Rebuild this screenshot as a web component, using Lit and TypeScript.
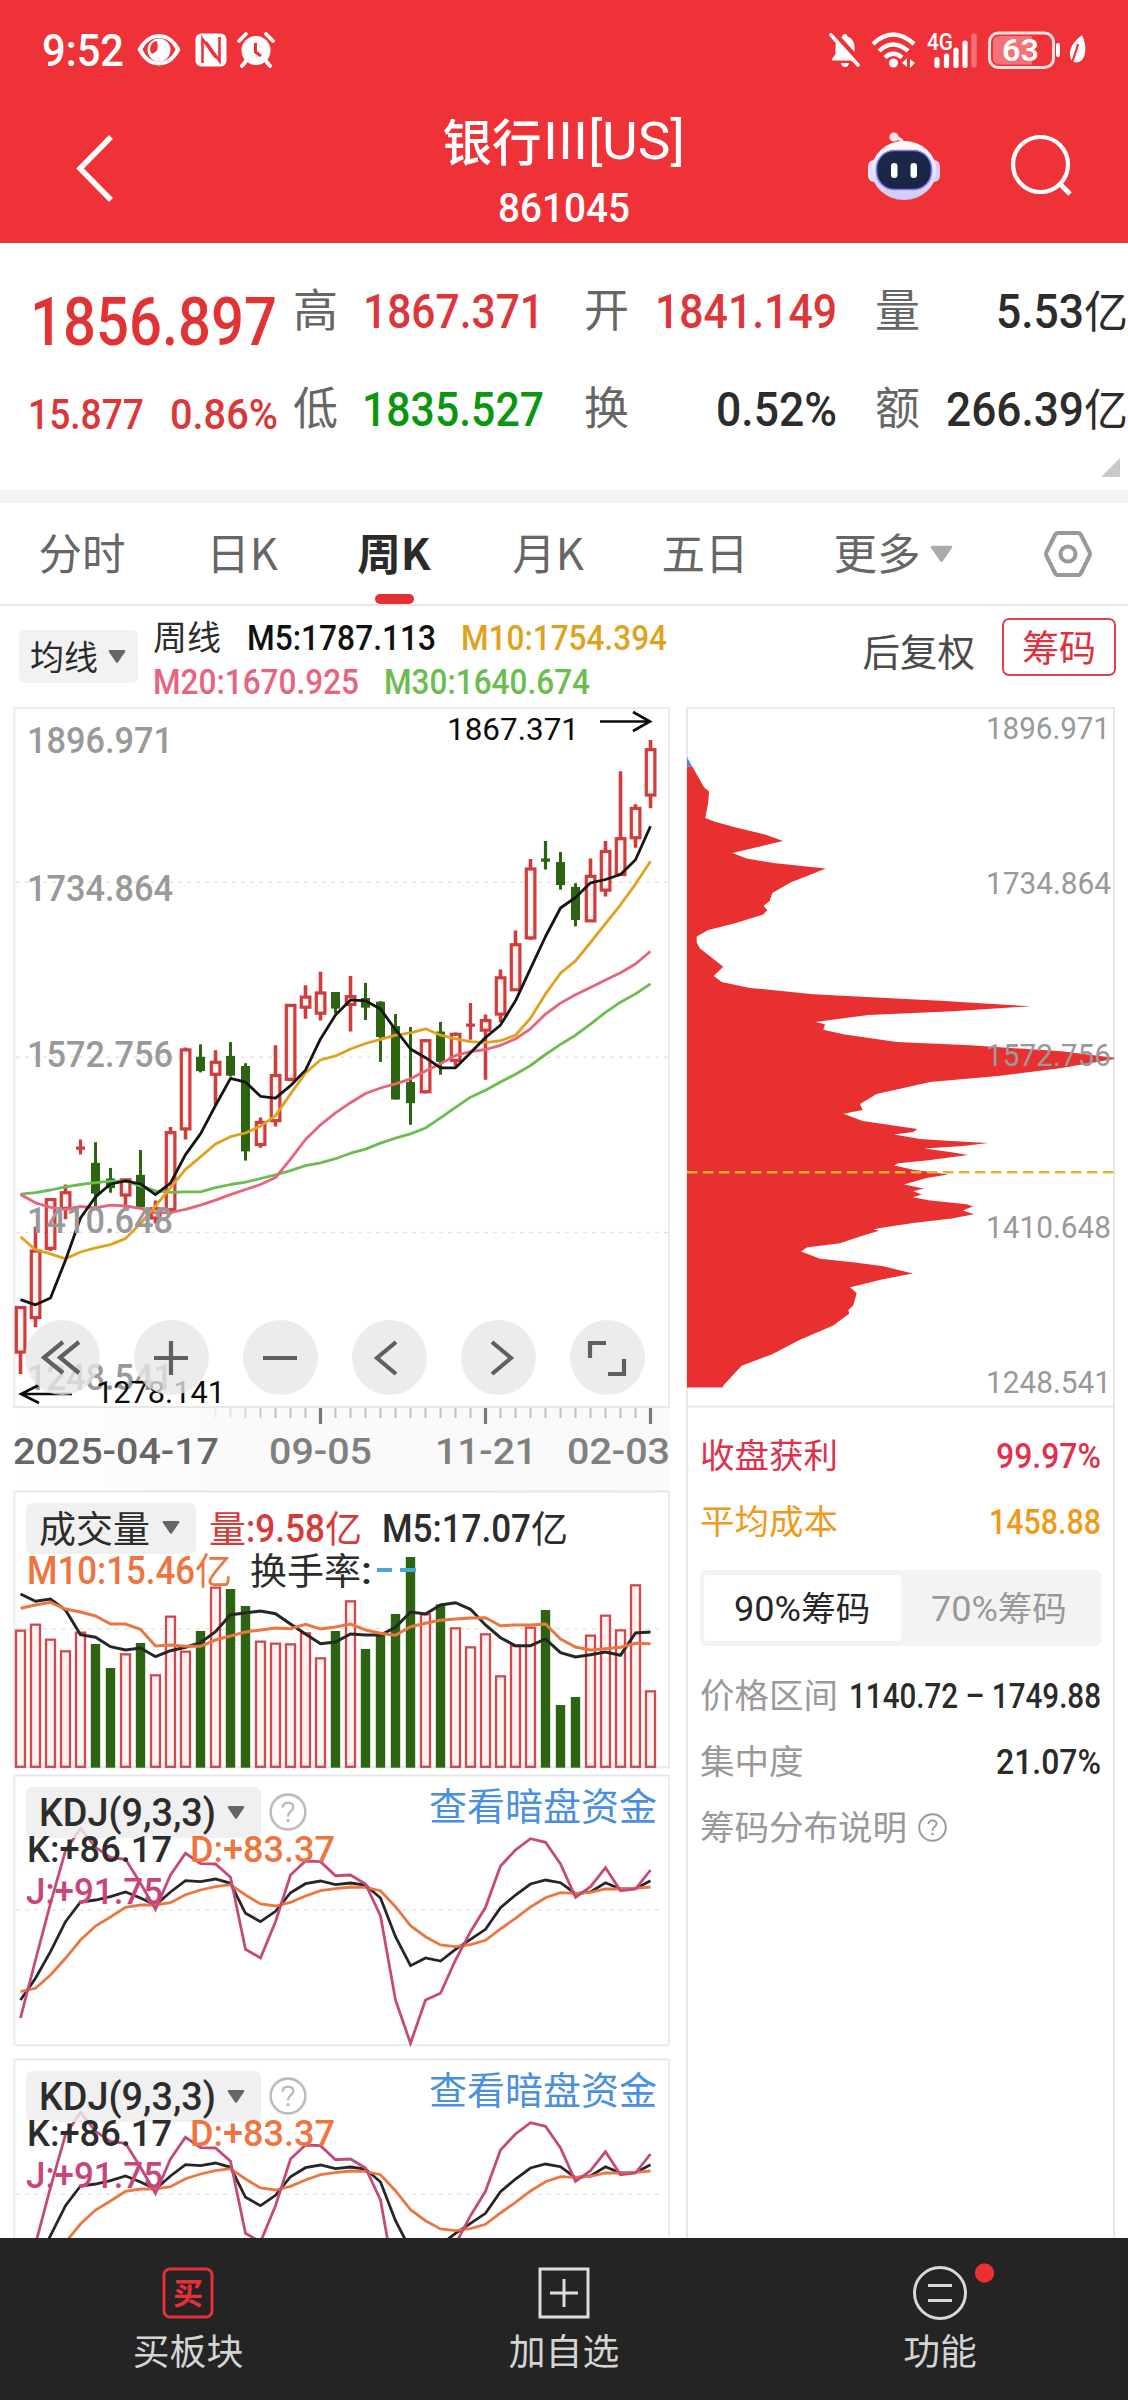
import { LitElement, html, svg, css, nothing } from "lit";
import { customElement, property } from "lit/decorators.js";

/* ---------- shared helpers ---------- */

const num = (text: string, width: number, size: number, weight = 500) => {
  const h = Math.round(size * 0.711);
  return html`<svg class="num" width=${width} height=${h}>
    <text x="0" y=${h} textLength=${width} lengthAdjust="spacingAndGlyphs"
      font-size=${size} font-weight=${weight}>${text}</text>
  </svg>`;
};

const label = (text: string, x: number, y: number, width: number, size: number, fill: string, weight = 400) =>
  svg`<text x=${x} y=${y} textLength=${width} lengthAdjust="spacingAndGlyphs"
    font-size=${size} font-weight=${weight} fill=${fill}>${text}</text>`;

const caret = (w: number, h: number, fill: string) =>
  html`<svg class="ico" width=${w} height=${h} viewBox="0 0 18 13"><path d="M1.5 0H16.5Q18 0.5 17 2L10 12.2Q9 13.4 8 12.2L1 2Q0 0.5 1.5 0Z" fill=${fill}/></svg>`;

const help = (d: number) =>
  html`<svg class="ico" width=${d} height=${d} viewBox="0 0 38 38">
    <circle cx="19" cy="19" r="17.4" fill="none" stroke="currentColor" stroke-width="2.6"/>
    <path d="M13.6 14.6Q14 9.6 19 9.6Q24.3 9.8 24.3 14.2Q24.2 16.6 21.4 18.6Q19 20.4 19 23.4" fill="none" stroke="currentColor" stroke-width="2.4"/>
    <circle cx="19" cy="27.6" r="1.7" fill="currentColor"/></svg>`;

const X0 = 20.5;
const PITCH = 15;
const cx = (i: number) => X0 + i * PITCH;
const line = (values: number[], unit: number) =>
  values.map((v, i) => `${cx(i).toFixed(1)},${(v * unit).toFixed(1)}`).join(" ");

const RED = "#d03c3c";
const GREEN = "#2d6412";

const base = css`
  * { box-sizing: border-box; }
  svg { display: block; flex: none; overflow: visible; }
  .num, .chart { font-family: Roboto, "Liberation Sans", sans-serif; }
  .num { fill: currentColor; }
`;

/* ---------- price chart ---------- */

type Candle = [up: 0 | 1, high: number, top: number, bottom: number, low: number];

const PRICE_UNIT = 0.4592;
const CANDLES: Candle[] = [
  [1, 1320, 1323, 1420, 1468], [1, 1147, 1200, 1345, 1366], [1, 1086, 1088, 1194, 1200],
  [1, 1055, 1073, 1107, 1131], [1, 957, 975, 977, 990], [0, 963, 1008, 1075, 1103],
  [0, 1019, 1042, 1063, 1073], [1, 1043, 1045, 1078, 1112], [0, 980, 1034, 1105, 1105],
  [1, 1090, 1108, 1128, 1140], [1, 930, 942, 1110, 1120], [1, 757, 762, 934, 957],
  [0, 750, 777, 808, 811], [1, 763, 789, 815, 882], [0, 745, 775, 818, 820],
  [0, 791, 797, 983, 1003], [1, 909, 920, 968, 975], [1, 752, 818, 916, 929],
  [1, 663, 665, 826, 830], [1, 621, 647, 669, 694], [1, 592, 638, 682, 698],
  [0, 636, 636, 672, 682], [1, 601, 646, 663, 722], [0, 616, 649, 670, 697],
  [0, 656, 657, 734, 788], [0, 684, 710, 870, 870], [0, 712, 832, 878, 925],
  [1, 738, 742, 853, 857], [0, 701, 722, 788, 816], [1, 724, 728, 785, 797],
  [1, 660, 707, 709, 740], [1, 685, 698, 719, 827], [1, 587, 605, 684, 702],
  [1, 502, 533, 631, 633], [1, 346, 368, 518, 522], [0, 307, 345, 352, 369],
  [0, 331, 353, 403, 413], [0, 399, 407, 479, 493], [1, 345, 384, 481, 482],
  [1, 307, 330, 414, 428], [1, 155, 302, 380, 382], [1, 227, 236, 300, 322],
  [1, 87, 108, 207, 236],
];
const MA5 = [1306, 1317, 1302, 1220, 1128, 1082, 1054, 1047, 1054, 1077, 1052, 990, 945, 883, 824, 832, 863, 867, 840, 806, 738, 686, 653, 655, 673, 718, 760, 779, 801, 801, 768, 735, 708, 655, 585, 515, 453, 430, 398, 391, 380, 348, 275];
const MA10 = [1169, 1197, 1206, 1217, 1202, 1193, 1186, 1173, 1140, 1102, 1062, 1022, 995, 967, 951, 943, 928, 905, 858, 812, 784, 775, 760, 748, 739, 730, 725, 716, 730, 738, 744, 746, 742, 730, 693, 640, 595, 568, 528, 487, 446, 401, 351];
const MA20 = [1077, 1095, 1105, 1109, 1103, 1106, 1100, 1102, 1107, 1117, 1116, 1109, 1100, 1089, 1077, 1066, 1055, 1040, 1000, 957, 925, 899, 877, 857, 845, 836, 825, 808, 792, 774, 766, 761, 752, 738, 716, 684, 660, 642, 626, 610, 594, 575, 547];
const MA30 = [1076, 1073, 1067, 1060, 1055, 1051, 1048, 1048, 1058, 1069, 1072, 1071, 1071, 1062, 1055, 1050, 1042, 1034, 1025, 1014, 1008, 999, 987, 978, 965, 954, 945, 932, 910, 887, 865, 850, 832, 815, 796, 772, 750, 730, 706, 680, 658, 640, 618];

@customElement("price-chart")
class PriceChart extends LitElement {
  static styles = [base, css`
    :host { display: block; }
    .wrap { position: relative; height: 701px; }
    .tools {
      position: absolute; left: 10.5px; bottom: 13px; display: flex; gap: 34px;
    }
    .tool {
      width: 75px; height: 75px; border-radius: 50%;
      background: rgba(231, 231, 231, 0.78);
      display: flex; align-items: center; justify-content: center;
    }
    .tool path { fill: none; stroke: #606060; stroke-width: 4.2; }
    .axis { height: 83px; background: linear-gradient(90deg, #fff 0%, #fafafa 30%, #f9f9f9 100%); }
  `];

  private candle([up, high, top, bottom, low]: Candle, i: number) {
    const x = cx(i);
    const [h, t, b, l] = [high, top, bottom, low].map((v) => v * PRICE_UNIT);
    if (b - t < 4) {
      const c = up ? RED : GREEN;
      return svg`<path d="M${x} ${h}V${l}M${x - 4.5} ${(t + b) / 2}H${x + 4.5}" stroke=${c} stroke-width="3.2" fill="none"/>`;
    }
    return up
      ? svg`<path d="M${x} ${h}V${t}M${x} ${b}V${l}" stroke=${RED} stroke-width="3.6"/>
          <rect x=${x - 4.2} y=${t} width="8.600" height=${b - t} fill="#fff4f2" stroke=${RED} stroke-width="3.2"/>`
      : svg`<path d="M${x} ${h}V${l}" stroke=${GREEN} stroke-width="3"/>
          <rect x=${x - 4.5} y=${t} width="9" height=${b - t} fill=${GREEN}/>`;
  }

  render() {
    const tools = [
      "M20 1L1 16.500L20 32M36 1L17 16.500L36 32", "M2 17H36M19 0V34", "M2 17H36",
      "M26 1L7 17L26 33", "M13 1L32 17L13 33", "M2 17V2H18M36 18V33H20",
    ];
    return html`
      <div class="wrap">
        <svg class="chart" width="656" height="701" viewBox="14 7 656 701">
          <path d="M14.300 708V8H669V708" fill="none" stroke="#ececec" stroke-width="2"/>
          <path d="M13.300 707H670" stroke="#e8e8e8" stroke-width="2"/>
          <path d="M16 182.3H668M16 357.3H668M16 532.6H668" stroke="#e4e4e4" stroke-width="1.5" stroke-dasharray="4 5"/>
          ${CANDLES.map((c, i) => this.candle(c, i))}
          ${[[MA30, "#6cbd4f"], [MA20, "#e8637c"], [MA10, "#dfa21d"], [MA5, "#151515"]].map(([v, c]) =>
            svg`<polyline points=${line(v as number[], PRICE_UNIT)} fill="none" stroke=${c} stroke-width="2.8" stroke-linejoin="round"/>`)}
          ${label("1896.971", 27, 53, 146, 36, "#999", 500)}
          ${label("1734.864", 27, 201, 146, 36, "#999", 500)}
          ${label("1572.756", 27, 367, 146, 36, "#999", 500)}
          ${label("1410.648", 27, 533, 146, 36, "#999", 500)}
          ${label("1248.541", 27, 690, 146, 36, "#999", 500)}
          ${label("1867.371", 447, 40, 132, 32, "#0c0c0c")}
          ${label("1278.141", 96, 702.5, 129, 32, "#0c0c0c")}
          <path d="M600 21.5H650M633 12L650 21.5L633 31" fill="none" stroke="#0c0c0c" stroke-width="2.6"/>
          <path d="M72 694H21M39 685L21 694L39 703" fill="none" stroke="#0c0c0c" stroke-width="2.6"/>
        </svg>
        <div class="tools">
          ${tools.map((d) => html`<div class="tool"><svg width="38" height="34" viewBox="0 0 38 34"><path d=${d}/></svg></div>`)}
        </div>
      </div>
      <div class="axis">
        <svg class="chart" width="656" height="83" viewBox="14 0 656 83">
          ${Array.from({ length: 30 }, (_, k) => k + 13).map((i) => {
            const major = i === 20 || i === 31 || i === 42;
            return svg`<path d="M${cx(i)} 0V${major ? 16 : 10}" stroke=${major ? "#777" : "#c0c0c0"}
              stroke-width=${major ? 3.2 : 2} opacity=${Math.min(1, (i - 12) / 5)}/>`;
          })}
          ${label("2025-04-17", 13, 55.5, 206, 37, "#666", 500)}
          ${label("09-05", 269, 55.5, 103, 37, "#808080", 500)}
          ${label("11-21", 435, 55.5, 102, 37, "#808080", 500)}
          ${label("02-03", 567, 55.5, 103, 37, "#808080", 500)}
        </svg>
      </div>`;
  }
}

/* ---------- volume ---------- */

const UNIT3 = 1 / 3;
const VOL = [419, 401, 446, 481, 425, 462, 534, 490, 459, 553, 377, 482, 423, 290, 297, 348, 452, 458, 460, 427, 502, 423, 331, 477, 430, 372, 201, 370, 343, 412, 469, 430, 556, 465, 410, 360, 645, 621, 434, 374, 418, 283, 601];
const VOL_DOWN = new Set([5, 6, 8, 12, 14, 15, 21, 23, 24, 25, 26, 28, 35, 36, 37]);
const VM5 = [312, 334, 327, 360, 434, 442, 470, 480, 474, 500, 482, 472, 458, 425, 374, 369, 363, 371, 402, 432, 461, 456, 432, 435, 435, 412, 366, 372, 345, 338, 358, 405, 443, 467, 467, 447, 488, 501, 494, 486, 496, 429, 426];
const VM10 = [355, 345, 337, 357, 366, 378, 402, 402, 418, 468, 465, 469, 469, 450, 438, 426, 420, 414, 416, 403, 417, 411, 402, 420, 430, 436, 410, 400, 391, 387, 384, 383, 407, 405, 405, 402, 447, 471, 480, 476, 472, 460, 461];

const panel = css`
  :host { display: block; font-family: "Noto Sans CJK SC", sans-serif; font-size: 37px; line-height: 50px; color: #2c2c2c; }
  .panel { position: relative; height: 284px; }
  .legend { position: absolute; left: 12px; right: 13px; top: 12px; }
  .row { display: flex; align-items: center; height: 50px; white-space: nowrap; }
  .pick { display: flex; align-items: center; height: 51px; border-radius: 6px; background: rgba(238, 237, 238, 0.82); flex: none; }
`;

@customElement("volume-panel")
class VolumePanel extends LitElement {
  static styles = [base, panel, css`
    .pick { width: 170px; padding: 0 16px 2px 13px; justify-content: space-between; }
    .vol { color: #d83a3a; display: flex; align-items: center; margin-left: 13px; }
    .m5 { display: flex; align-items: center; margin-left: 20px; }
    .m10 { display: flex; align-items: center; color: #ee7440; padding-left: 1px; }
    .rate { display: flex; align-items: center; margin-left: 18px; }
    .second { height: 34px; line-height: 34px; margin-top: 0; }
    .cjk { position: relative; top: -1.5px; }
  `];
  render() {
    return html`<div class="panel">
      <svg class="chart" width="656" height="284" viewBox="14 1 656 284">
        <path d="M13.300 1.5H670M14 277.3H670" stroke="#e8e8e8" stroke-width="2"/>
        <path d="M14.300 1V277M669 1V277" stroke="#ececec" stroke-width="2"/>
        <path d="M16 138.7H664" stroke="#e6e6e6" stroke-width="1.5" stroke-dasharray="4 5"/>
        ${VOL.map((v, i) => {
          const y = v * UNIT3;
          return VOL_DOWN.has(i)
            ? svg`<rect x=${cx(i) - 4.7} y=${y} width="9.400" height=${277.7 - y} fill=${GREEN}/>`
            : svg`<rect x=${cx(i) - 4.5} y=${y + 1} width="9" height=${275.8 - y} fill="#fff4f2" stroke="#d2484c" stroke-width="2.300"/>`;
        })}
        <polyline points=${line(VM5, UNIT3)} fill="none" stroke="#262626" stroke-width="3"/>
        <polyline points=${line(VM10, UNIT3)} fill="none" stroke="#ea7742" stroke-width="3"/>
      </svg>
      <div class="legend">
        <div class="row">
          <div class="pick"><span>成交量</span>${caret(18, 13, "#666")}</div>
          <div class="vol"><span class="cjk">量</span>${num(":9.58", 79, 38, 500)}<span class="cjk">亿</span></div>
          <div class="m5">${num("M5:17.07", 149, 38, 500)}<span class="cjk">亿</span></div>
        </div>
        <div class="row second">
          <div class="m10">${num("M10:15.46", 168, 38, 500)}<span class="cjk">亿</span></div>
          <div class="rate"><span class="cjk">换手率</span>${num(":", 11, 38, 500)}
            <svg width="42" height="4"><path d="M5 2H20M28 2H44" stroke="#4da6d8" stroke-width="4"/></svg></div>
        </div>
      </div>
    </div>`;
  }
}

/* ---------- KDJ ---------- */

const K = [690, 625, 545, 455, 396, 390, 380, 366, 384, 405, 366, 332, 335, 327, 340, 430, 455, 424, 368, 341, 333, 344, 339, 345, 384, 500, 587, 564, 573, 538, 508, 478, 413, 375, 342, 330, 338, 371, 366, 338, 357, 356, 332];
const D = [665, 655, 615, 565, 510, 468, 441, 412, 405, 405, 398, 374, 360, 350, 344, 375, 402, 408, 397, 378, 362, 356, 351, 352, 362, 410, 467, 500, 525, 530, 524, 511, 477, 445, 411, 383, 368, 370, 367, 357, 357, 355, 351];
const J = [744, 570, 400, 242, 175, 232, 262, 268, 340, 418, 315, 250, 281, 282, 322, 538, 564, 455, 315, 273, 275, 317, 315, 342, 438, 690, 820, 690, 670, 570, 485, 412, 288, 240, 206, 217, 282, 382, 350, 293, 362, 357, 300];

@customElement("kdj-panel")
class KdjPanel extends LitElement {
  static styles = [base, panel, css`
    .pick { width: 235px; padding: 0 16px 0 13px; justify-content: space-between; }
    .help { color: #bcbcbc; margin-left: 8px; }
    .link { margin-left: auto; color: #4a8fe0; font-size: 38px; position: relative; top: -8.5px; }
    .k { height: 42px; margin-top: -10px; padding-left: 1px; gap: 18px; }
    .j { height: 42px; color: #c8457c; padding-left: 0; }
    .d { color: #ee7440; }
  `];
  render() {
    return html`<div class="panel">
      <svg class="chart" width="656" height="284" viewBox="14 5 656 284">
        <path d="M13.300 5.5H670" stroke="#e8e8e8" stroke-width="2"/>
        <path d="M14 275.2H670" stroke="#ebebeb" stroke-width="2"/>
        <path d="M14.300 5V275M669 5V275" stroke="#ececec" stroke-width="2"/>
        <path d="M16 140H660" stroke="#e6e6e6" stroke-width="1.5" stroke-dasharray="4 5"/>
        <polyline points=${line(K, UNIT3)} fill="none" stroke="#262626" stroke-width="2.8"/>
        <polyline points=${line(D, UNIT3)} fill="none" stroke="#ea7742" stroke-width="2.8"/>
        <polyline points=${line(J, UNIT3)} fill="none" stroke="#c44a7c" stroke-width="2.8"/>
      </svg>
      <div class="legend">
        <div class="row">
          <div class="pick">${num("KDJ(9,3,3)", 177, 38, 500)}${caret(18, 13, "#666")}</div>
          <div class="help">${help(38)}</div>
          <div class="link">查看暗盘资金</div>
        </div>
        <div class="row k">${num("K:+86.17", 145, 37.5, 500)}<span class="d">${num("D:+83.37", 145, 37.5, 500)}</span></div>
        <div class="row j">${num("J:+91.75", 137, 37.5, 500)}</div>
      </div>
    </div>`;
  }
}

/* ---------- chip distribution ---------- */

const CHIPS: [number, number][] = [
  [37, 145], [72, 190], [87, 199], [85, 222], [76, 257], [105, 265], [165, 277], [255, 293], [309, 307], [240, 319],
  [157, 333], [200, 345], [280, 355], [437, 367], [385, 382], [333, 397], [277, 420], [269, 438], [251, 448], [262, 458],
  [250, 467], [165, 486], [85, 501], [50, 515], [50, 528], [60, 541], [130, 581], [101, 601], [125, 614], [210, 627],
  [400, 641], [780, 655], [1052, 667], [820, 678], [565, 686], [406, 701], [435, 706], [430, 718], [490, 728], [650, 745],
  [870, 752], [1145, 765], [1303, 779], [1303, 782], [1140, 802], [955, 819], [750, 832], [590, 858], [540, 880], [548, 893], [490, 901],
  [548, 917], [712, 934], [700, 941], [642, 946], [720, 956], [800, 960], [924, 965], [850, 971], [733, 977], [810, 984],
  [864, 991], [740, 1003], [655, 1009], [642, 1014], [700, 1023], [740, 1027], [804, 1033], [740, 1041], [672, 1055],
  [731, 1064], [700, 1070], [725, 1077], [698, 1083], [750, 1090], [860, 1098], [879, 1103], [848, 1112], [882, 1120],
  [815, 1129], [700, 1139], [600, 1150], [580, 1153], [597, 1156], [545, 1167], [480, 1183], [380, 1192], [363, 1201],
  [420, 1217], [525, 1225], [610, 1233], [698, 1249], [605, 1262], [545, 1273], [510, 1279], [530, 1292], [520, 1318],
  [505, 1329], [508, 1336], [460, 1362], [360, 1393], [275, 1425], [185, 1450], [130, 1493], [128, 1497], [21, 1497], [21, 145],
];

@customElement("chip-panel")
class ChipPanel extends LitElement {
  static styles = [base, css`
    :host { display: flex; flex-direction: column; font-family: "Noto Sans CJK SC", sans-serif; font-size: 34.5px; line-height: 66px; color: #999; }
    .stats { flex: 1; border: solid #e6e6e6; border-width: 0 2px; padding: 14px 12px 0 12px; }
    .row { display: flex; justify-content: space-between; align-items: center; height: 66px; }
    .row span { position: relative; top: -2px; white-space: nowrap; }
    .profit { color: #e0304a; }
    .cost { color: #ef9a1a; }
    .dark { color: #2a2a2a; }
    .seg { display: flex; height: 76px; margin: 16px 0 16px; padding: 5px 4px; background: #f3f3f3; border-radius: 5px; }
    .opt { flex: 1; display: flex; align-items: center; justify-content: center; border-radius: 4px; }
    .opt span { position: relative; top: -2px; }
    .on { background: #fff; color: #262626; }
    .note { justify-content: flex-start; gap: 11px; }
  `];
  render() {
    const pts = CHIPS.map(([x, y]) => `${(x / 3).toFixed(1)},${(y * PRICE_UNIT).toFixed(1)}`).join(" ");
    return html`
      <svg class="chart" width="429" height="701" viewBox="6 7 429 701">
        <path d="M7 708V8H434V708" fill="none" stroke="#e3e3e3" stroke-width="1.6"/>
        <path d="M7 706.6H434" stroke="#e3e3e3" stroke-width="1.6"/>
        <polygon points="7,57 12.3,66.6 7,66.6" fill="#4f8fe0"/>
        <polygon points=${pts} fill="#e83030"/>
        <path d="M7 472.3H434" stroke="#e6b22e" stroke-width="2.6" stroke-dasharray="10.500 5.500"/>
        ${label("1896.971", 306, 39, 124, 31, "#999")}
        ${label("1734.864", 306, 194, 125, 31, "#999")}
        ${label("1572.756", 306, 366, 125, 31, "#999")}
        ${label("1410.648", 306, 538, 125, 31, "#999")}
        ${label("1248.541", 306, 693, 125, 31, "#999")}
      </svg>
      <div class="stats">
        <div class="row profit"><span>收盘获利</span>${num("99.97%", 105, 35)}</div>
        <div class="row cost"><span>平均成本</span>${num("1458.88", 112, 35)}</div>
        <div class="seg">
          <div class="opt on">${num("90%", 67, 35, 400)}<span>筹码</span></div>
          <div class="opt">${num("70%", 67, 35, 400)}<span>筹码</span></div>
        </div>
        <div class="row"><span>价格区间</span><div class="dark">${num("1140.72 – 1749.88", 252, 34.5)}</div></div>
        <div class="row"><span>集中度</span><div class="dark">${num("21.07%", 105, 35)}</div></div>
        <div class="row note"><span>筹码分布说明</span>${help(29)}</div>
      </div>`;
  }
}

/* ---------- page ---------- */

@customElement("quote-pair")
class QuotePair extends LitElement {
  @property() name = "";
  @property() value = "";
  @property() unit = "";
  @property({ type: Number }) span = 0;
  static styles = [base, css`
    :host { display: flex; align-items: center; justify-content: space-between; font-family: "Noto Sans CJK SC", sans-serif; font-size: 45px; line-height: 60px; }
    .name { color: #666; position: relative; top: -3px; left: -1px; }
    .val { display: flex; align-items: center; }
    .unit { position: relative; top: -2px; font-size: 44px; }
  `];
  render() {
    return html`<span class="name">${this.name}</span>
      <div class="val">${num(this.value, this.span, 48)}${this.unit ? html`<span class="unit">${this.unit}</span>` : nothing}</div>`;
  }
}

@customElement("app-root")
class AppRoot extends LitElement {
  static styles = [base, css`
    :host { display: flex; flex-direction: column; width: 1128px; height: 2400px; overflow: hidden; background: #fff; font-family: "Noto Sans CJK SC", sans-serif; color: #2c2c2c; }
    .head { flex: none; height: 243px; background: #ef3238; color: #fff; }
    .status { height: 100px; display: flex; align-items: center; justify-content: space-between; padding: 0 42px 0 42px; }
    .left, .right { display: flex; align-items: center; }
    .eye { margin-left: 12px; }
    .nfc { margin-left: 13px; }
    .clock { margin-left: 10px; }
    .wifi, .cell { margin-left: 10px; }
    .battery { margin-left: 11px; }
    .leaf { margin-left: 6px; }
    .bar { display: grid; grid-template-columns: 1fr 300px 1fr; height: 143px; align-items: start; }
    .back { padding: 35px 0 0 74px; }
    .title { display: flex; flex-direction: column; align-items: center; }
    .name { display: flex; align-items: center; font-size: 49.500px; font-weight: 500; line-height: 60px; height: 60px; margin-top: 11px; }
    .name span { position: relative; top: -1px; left: -1px; }
    .code { margin-top: 21.500px; }
    .acts { display: flex; justify-content: flex-end; align-items: center; padding: 31px 55px 0 0; gap: 70px; }
    .quote { flex: none; height: 247px; display: grid; grid-template-columns: 255px repeat(3, 252px); column-gap: 39px; grid-template-rows: 98px 98px 1fr; padding-top: 19px; }
    .big { color: #e23334; padding: 36px 0 0 30px; }
    .chg { color: #dc3638; padding: 38px 0 0 28px; display: flex; gap: 26px; }
    quote-pair { color: #2c2c2c; }
    quote-pair.up { color: #dc3638; }
    quote-pair.low { color: #0a960f; }
    quote-pair.up.wide, quote-pair.low { width: 250px; }
    .corner { grid-column: 4; justify-self: end; padding: 0 8px; }
    .band { flex: none; height: 13px; background: #f4f4f4; }
    .tabs { flex: none; height: 103px; border-bottom: 2px solid #e6e6e6; display: grid; grid-template-columns: 164px 156px 148px 160px 154px 222px 124px; font-size: 43.5px; line-height: 64px; color: #666; }
    .tab { display: flex; flex-direction: column; align-items: center; padding-top: 17px; }
    .tab.on { font-weight: 700; color: #2b2b2b; }
    .tab .mark { width: 39px; height: 10px; border-radius: 5px; background: #e33033; margin-top: 10px; }
    .more { flex-direction: row; align-items: flex-start; justify-content: center; gap: 9px; }
    .more svg { margin-top: 25px; }
    .cfg svg { margin: 10px 0 0 4px; }
    .ma { flex: none; height: 101px; display: flex; align-items: flex-start; padding: 0 12px 0 19px; font-size: 34px; line-height: 44px; }
    .pick { width: 119px; height: 53px; margin-top: 24px; border-radius: 6px; background: #f2f2f2; display: flex; align-items: center; justify-content: space-between; padding: 0 12px 1px 11px; }
    .lines { margin: 9px 0 0 15px; display: flex; flex-direction: column; width: 620px; }
    .ln { display: flex; align-items: center; height: 44px; }
    .ln span { position: relative; top: -1px; margin-right: 26px; }
    .m5 { color: #111; margin-right: 25px; }
    .m10 { color: #dfa21d; }
    .m20 { color: #e8637c; margin-right: 25px; }
    .m30 { color: #6cbd4f; }
    .adj { margin: 19px 0 0 auto; font-size: 37.5px; line-height: 50px; color: #4a4a4a; }
    .chips { margin: 12px 0 0 27px; width: 114px; height: 58px; border: 2px solid #dc4450; border-radius: 7px; color: #e0303e; font-size: 37px; line-height: 52px; text-align: center; }
    .main { flex: 1; min-height: 0; overflow: hidden; display: grid; grid-template-columns: 656px 429px; column-gap: 16px; padding-left: 14px; }
    .stack, chip-panel { height: 1531px; }
    .nav { flex: none; position: relative; height: 162px; background: #242424; color: #d4d4d4; display: grid; grid-template-columns: 376px 376px 376px; font-size: 36.8px; line-height: 50px; }
    .item { display: flex; flex-direction: column; align-items: center; padding-top: 27px; }
    .item svg { height: 55px; margin-bottom: 4px; }
    .buy { font-family: "Noto Sans CJK SC", sans-serif; }
  `];

  private statusIcons() {
    return html`
      <svg class="eye" width="46" height="34" viewBox="0 0 46 34"><path fill-rule="evenodd" fill="#fff" d="M23 1C34 1 41 10 44.500 16.500C41 24 34 32.500 23 32.500C12 32.500 5 24 1.500 16.500C5 10 12 1 23 1ZM23 5C14 5 9 11 6.500 16.500C9 22 14 28.500 23 28.500C32 28.500 37 22 39.500 16.500C37 11 32 5 23 5Z"/><circle cx="23" cy="17" r="11.500" fill="#fff"/><path d="M21 8A8 8 0 0 0 16 21Q24 19 21 8Z" fill="#ef3238"/></svg>
      <svg class="nfc" width="32" height="34" viewBox="0 0 32 34"><rect x="0.500" y="0.500" width="31" height="33" rx="6" fill="#fff"/><path d="M7.500 30V6L21 25M24.500 4V28L11 9" fill="none" stroke="#ef3238" stroke-width="2.600"/></svg>
      <svg class="clock" width="38" height="36" viewBox="0 0 38 36"><circle cx="19" cy="18.500" r="14.500" fill="#fff"/><path d="M2 9L9 2M36 9L29 2M9 29L5 34M29 29L33 34" stroke="#fff" stroke-width="3.800" stroke-linecap="round"/><path d="M18.500 11V20L24 24" fill="none" stroke="#ef3238" stroke-width="3"/></svg>`;
  }

  private signalIcons() {
    return html`
      <svg width="32" height="36" viewBox="0 0 32 36"><path d="M16 2C17.500 2 18.500 3 18.500 4.500C23 6 25.500 10 25.500 15V22L29 27V28.500H3V27L6.500 22V15C6.500 10 9 6 13.500 4.500C13.500 3 14.500 2 16 2Z" fill="#fff"/><path d="M12 31H20Q19.500 35 16 35T12 31Z" fill="#fff"/><path d="M4 1L31 31" stroke="#ef3238" stroke-width="6.500"/><path d="M2 3L29 33" stroke="#fff" stroke-width="3.600" stroke-linecap="round"/></svg>
      <svg class="wifi" width="46" height="36" viewBox="0 0 46 36"><g fill="none" stroke="#fff" stroke-width="4.400"><path d="M2 12Q22 -7 43 12"/><path d="M8 19Q22 6 37 19"/><path d="M14 25.500Q22 18 31 25.500"/></g><circle cx="22.500" cy="31" r="4.500" fill="#fff"/><path d="M31 31L36 26V35ZM44 31L39 36V27Z" fill="#fff"/></svg>
      <svg class="num cell" width="50" height="36" viewBox="0 0 50 36"><text x="0" y="17.500" font-size="23" font-weight="500" textLength="26" lengthAdjust="spacingAndGlyphs">4G</text><path d="M10 27.500V33.500M19.500 24V33.500M29 18V33.500M38 11V33.500" stroke="#fff" stroke-width="5.200" stroke-linecap="round"/><path d="M47 4V33" stroke="#fff" stroke-opacity=".3" stroke-width="5.500" stroke-linecap="round"/></svg>
      <svg class="num battery" width="74" height="38" viewBox="0 0 74 38"><rect x="1.500" y="2" width="64" height="34.500" rx="9" fill="none" stroke="#fff" stroke-opacity=".85" stroke-width="3"/><path d="M12 5H44V33.500H12Q5 33.500 5 27V11Q5 5 12 5Z" fill="#fff" opacity=".32"/><text x="14" y="30" font-size="32" font-weight="600" textLength="37" lengthAdjust="spacingAndGlyphs">63</text><path d="M70 14V24" stroke="#fff" stroke-width="4" stroke-linecap="round"/></svg>
      <svg class="leaf" width="18" height="32" viewBox="0 0 18 32"><path d="M14 1C18 9 19 20 14 26C11 29 7 29 4 27C-2 17 6 7 14 1Z" fill="#fff"/><path d="M10 10C8 18 7 22 3 30" stroke="#ef3238" stroke-width="2.200" fill="none"/></svg>`;
  }

  render() {
    return html`
      <div class="head">
        <div class="status">
          <div class="left">${num("9:52", 82, 45)}${this.statusIcons()}</div>
          <div class="right">${this.signalIcons()}</div>
        </div>
        <div class="bar">
          <div class="back"><svg width="40" height="68" viewBox="0 0 40 68"><path d="M37 2L6 33.500L37 65" fill="none" stroke="#fff" stroke-width="5.400"/></svg></div>
          <div class="title">
            <div class="name"><span>银行</span>${num("III[US]", 142, 51, 400)}</div>
            <div class="code">${num("861045", 132, 41)}</div>
          </div>
          <div class="acts">
            <svg width="74" height="70" viewBox="0 0 74 70">
              <defs>
                <linearGradient id="hd" x1="0" y1="0" x2="0" y2="1"><stop offset="0" stop-color="#fff"/><stop offset="1" stop-color="#cfcaf6"/></linearGradient>
                <linearGradient id="fc" x1="0" y1="0" x2="1" y2="1"><stop offset="0" stop-color="#1a2a46"/><stop offset="1" stop-color="#1a2348"/></linearGradient>
              </defs>
              <path d="M35 14Q36 7 28 7" fill="none" stroke="#f4dfe8" stroke-width="3.500"/>
              <circle cx="27" cy="6" r="4.600" fill="#f8e6ec"/>
              <rect x="1" y="29" width="12" height="22" rx="6" fill="#e4e0fb"/><rect x="61" y="29" width="12" height="22" rx="6" fill="#d4cef8"/>
              <ellipse cx="37" cy="39.500" rx="32.500" ry="29.500" fill="url(#hd)"/>
              <rect x="9.500" y="19.500" width="55" height="39" rx="18" fill="url(#fc)" stroke="#8478e8" stroke-width="1.600"/>
              <rect x="24" y="32" width="6.500" height="15" rx="3.200" fill="#fff"/><rect x="43.500" y="32" width="6.500" height="15" rx="3.200" fill="#fff"/>
            </svg>
            <svg width="62" height="62" viewBox="0 0 62 62"><circle cx="29.500" cy="29.500" r="27.500" fill="none" stroke="#fff" stroke-width="4.200"/><path d="M49 49L59 59" stroke="#fff" stroke-width="4.800"/></svg>
          </div>
        </div>
      </div>

      <div class="quote">
        <div class="big">${num("1856.897", 247, 66)}</div>
        <quote-pair class="up wide" name="高" value="1867.371" span="181"></quote-pair>
        <quote-pair class="up" name="开" value="1841.149" span="182"></quote-pair>
        <quote-pair name="量" value="5.53" unit="亿" span="88"></quote-pair>
        <div class="chg">${num("15.877", 116, 43)}${num("0.86%", 108, 43)}</div>
        <quote-pair class="low" name="低" value="1835.527" span="182"></quote-pair>
        <quote-pair name="换" value="0.52%" span="121"></quote-pair>
        <quote-pair name="额" value="266.39" unit="亿" span="138"></quote-pair>
        <div class="corner"><svg width="19" height="19"><path d="M19 0V19H0Z" fill="#c9c9c9"/></svg></div>
      </div>
      <div class="band"></div>

      <div class="tabs">
        <div class="tab">分时</div>
        <div class="tab">日K</div>
        <div class="tab on">周K<div class="mark"></div></div>
        <div class="tab">月K</div>
        <div class="tab">五日</div>
        <div class="tab more">更多${caret(23, 18, "#aaa")}</div>
        <div class="tab cfg"><svg width="50" height="48" viewBox="0 0 50 48"><path d="M15 3H35Q37 3 38 5L46.500 22Q47.500 24 46.500 26L38 43Q37 45 35 45H15Q13 45 12 43L3.500 26Q2.500 24 3.500 22L12 5Q13 3 15 3Z" fill="none" stroke="#999" stroke-width="4"/><circle cx="25" cy="24" r="7.500" fill="none" stroke="#999" stroke-width="4"/></svg></div>
      </div>

      <div class="ma">
        <div class="pick"><span>均线</span>${caret(18, 13, "#666")}</div>
        <div class="lines">
          <div class="ln"><span>周线</span><div class="m5">${num("M5:1787.113", 189, 35)}</div><div class="m10">${num("M10:1754.394", 206, 35)}</div></div>
          <div class="ln"><div class="m20">${num("M20:1670.925", 206, 35)}</div><div class="m30">${num("M30:1640.674", 206, 35)}</div></div>
        </div>
        <div class="adj">后复权</div>
        <div class="chips">筹码</div>
      </div>

      <div class="main">
        <div class="stack">
          <price-chart></price-chart>
          <volume-panel></volume-panel>
          <kdj-panel></kdj-panel>
          <kdj-panel></kdj-panel>
        </div>
        <chip-panel></chip-panel>
      </div>

      <div class="nav">
        <div class="item">
          <svg width="54" height="54" viewBox="0 0 54 54"><rect x="3" y="3.500" width="48" height="48" rx="6" fill="none" stroke="#e83038" stroke-width="3"/><text class="buy" x="27" y="38.500" text-anchor="middle" font-size="30" font-weight="700" fill="#e83038">买</text></svg>
          <span>买板块</span>
        </div>
        <div class="item">
          <svg width="54" height="54" viewBox="0 0 54 54"><path d="M3 3.500H51V51.500H3ZM13 27.500H41M27 13.500V41.500" fill="none" stroke="#dedede" stroke-width="3"/></svg>
          <span>加自选</span>
        </div>
        <div class="item">
          <svg width="54" height="54" viewBox="0 0 54 54"><circle cx="27" cy="27.500" r="25.500" fill="none" stroke="#d8d8d8" stroke-width="3"/><path d="M15 20H39M15 35H39" stroke="#d8d8d8" stroke-width="3"/><circle cx="71.500" cy="7.500" r="9.700" fill="#ea3030"/></svg>
          <span>功能</span>
        </div>
      </div>`;
  }
}
